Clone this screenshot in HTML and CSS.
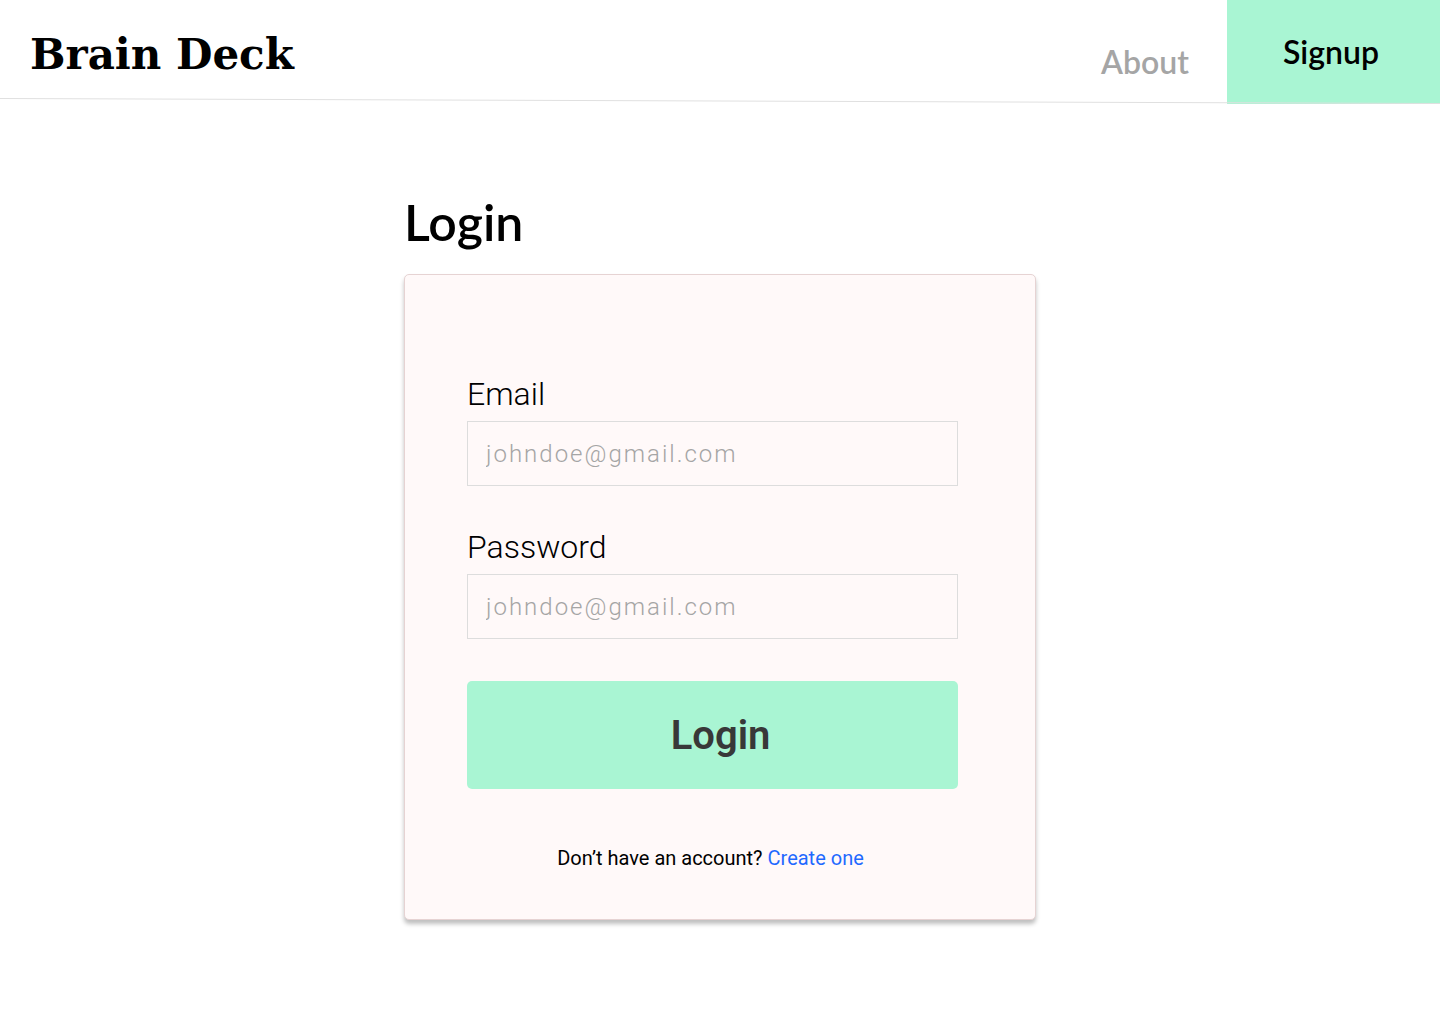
FILE: index.html
```html
<!DOCTYPE html>
<html lang="en">
<head>
  <meta charset="utf-8">
  <meta name="viewport" content="width=device-width, initial-scale=1">
  <title>Brain Deck – Login</title>
  <link rel="stylesheet" href="styles.css">
</head>
<body>
  <header class="header">
    <a class="logo" href="#">Brain Deck</a>
    <nav class="nav">
      <a class="nav-link" href="#">About</a>
      <a class="nav-signup" href="#">Signup</a>
    </nav>
    <svg class="header-rule" viewBox="0 0 1440 6" preserveAspectRatio="none" aria-hidden="true">
      <line x1="0" y1="0.5" x2="1440" y2="5.5"/>
    </svg>
  </header>
  <main class="main">
    <h1 class="title">Login</h1>
    <form class="card">
      <div class="field">
        <label class="label" for="email">Email</label>
        <input class="input" id="email" type="email" placeholder="johndoe@gmail.com">
      </div>
      <div class="field">
        <label class="label" for="password">Password</label>
        <input class="input" id="password" type="password" placeholder="johndoe@gmail.com">
      </div>
      <button class="submit" type="submit">Login</button>
      <p class="note">Don’t have an account? <a class="note-link" href="#">Create one</a></p>
    </form>
  </main>
</body>
</html>
```

FILE: styles.css
```css
* {
  box-sizing: border-box;
}

body {
  margin: 0;
  background: #fff;
  color: #000;
  font-family: Roboto, "Liberation Sans", sans-serif;
}

a {
  text-decoration: none;
}

.header {
  position: relative;
  display: flex;
  justify-content: space-between;
  min-height: 104px;
}

.logo {
  padding: 27px 0 0 30px;
  color: #000;
  font-family: "DejaVu Serif", serif;
  font-size: 42px;
  font-weight: 700;
  line-height: 56px;
}

.nav {
  display: flex;
  gap: 38px;
  font-family: Lato, sans-serif;
  font-size: 32px;
  font-weight: 600;
  line-height: 40px;
}

.nav-link {
  padding-top: 42px;
  color: #a5a5a5;
}

.nav-signup {
  min-width: 213px;
  padding: 32px 56px;
  background: #a9f5d3;
  color: #000;
}

.header-rule {
  position: absolute;
  left: 0;
  bottom: 0;
  width: 100%;
  height: 6px;
}

.header-rule line {
  stroke: #e0e0e0;
  stroke-width: 1;
}

.main {
  width: 100%;
  max-width: 632px;
  margin: 0 auto;
  padding: 88px 0 100px;
}

.title {
  margin: 0 0 22px;
  font-family: Lato, sans-serif;
  font-size: 50px;
  font-weight: 600;
  line-height: 60px;
}

.card {
  display: flex;
  flex-direction: column;
  gap: 42px;
  padding: 100px 77px 48px 62px;
  border: 1px solid #e6d3d3;
  border-radius: 5px;
  background: #fff9f9;
  box-shadow: 0 4px 4px rgba(0, 0, 0, 0.25);
}

.field {
  display: flex;
  flex-direction: column;
  gap: 8px;
}

.label {
  font-size: 32px;
  font-weight: 300;
  line-height: 38px;
}

.input {
  width: 100%;
  height: 65px;
  padding: 0 18px;
  border: 1px solid #dddddd;
  border-radius: 0;
  background: transparent;
  color: #000;
  font-family: inherit;
  font-size: 24px;
  font-weight: 300;
  letter-spacing: 2px;
}

.input::placeholder {
  color: #a5a5a5;
  opacity: 1;
}

.submit {
  padding: 31px 0 29px 16px;
  border: 0;
  border-radius: 5px;
  background: #a9f5d3;
  color: #383838;
  font-family: inherit;
  font-size: 40px;
  font-weight: 600;
  line-height: 48px;
}

.note {
  margin: 15px 0 1px;
  padding-right: 4px;
  font-size: 20px;
  line-height: 24px;
  text-align: center;
}

.note-link {
  color: #1f69ff;
}
```
